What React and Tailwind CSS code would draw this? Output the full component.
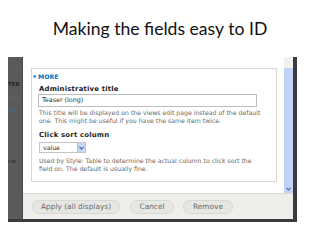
export default function App() {
  const dv = "font-['DejaVu_Sans',sans-serif]";
  return (
    <div className="w-[320px] h-[240px] bg-white overflow-hidden flex flex-col">
      <div className="h-[57px] flex justify-center pt-[18px] text-[17.6px] leading-[22px] text-[#111111] font-['Lato',sans-serif]">
        Making the fields easy to ID
      </div>
      <div className={`ml-[8px] w-[289px] h-[165px] flex flex-col ${dv}`}>
        <div className="flex flex-1 min-h-0">
          <div className="w-[15px] bg-[#5a5a5a] overflow-hidden flex flex-col text-[5.5px] leading-[8px] whitespace-nowrap border-r border-[#4a4a4a]">
            <div className="mt-[6px] text-[#4f6987]">e (=</div>
            <div className="mt-[9px] text-[#242424] font-bold">TER</div>
            <div className="mt-[6px] text-[#4f6987]">y titl</div>
            <div className="mt-[4px] text-[#4f6987]">dan</div>
            <div className="mt-[43px] text-[#2a2a2a]">ew</div>
          </div>
          <div className="flex-1 flex flex-col">
            <div className="flex-1 flex bg-white min-h-0">
              <div className="flex-1 pl-[8px] pr-[7px] pt-[11px]">
                <div className="h-[114px] border border-[#d6d6d6] px-[7px] pt-[4px] flex flex-col">
                  <div className="-ml-[6px] flex items-center gap-[2px] h-[8px] leading-[8px] text-[6.2px] font-bold text-[#0074bd]">
                    <span className="text-[4px]">▼</span>
                    <span>MORE</span>
                  </div>
                  <div className="mt-[4px] h-[9px] leading-[9px] text-[6.9px] font-bold text-[#222222] tracking-[0.2px]">
                    Administrative title
                  </div>
                  <div className="-ml-[1px] w-[219px] h-[13px] border border-[#bdbdbd] text-[6.4px] leading-[11px] pl-[3px] text-[#333333]">
                    Teaser (long)
                  </div>
                  <div className="mt-[2px] text-[6.2px] leading-[8px] text-[#6b6b6b] whitespace-nowrap">
                    <div>This title will be displayed on the views edit page instead of the default</div>
                    <div>one. This might be useful if you have the same item twice.</div>
                  </div>
                  <div className="mt-[6px] h-[9px] leading-[9px] text-[6.9px] font-bold text-[#222222] tracking-[0.2px]">
                    Click sort column
                  </div>
                  <div className="mt-[2px] w-[47px] h-[11px] border border-[#c4c4c4] flex items-center text-[6.2px] text-[#333333]">
                    <span className="flex-1 pl-[3px] leading-[9px]">value</span>
                    <span className="w-[8px] h-[9px] bg-[#c8d8f4] border-l border-[#aabde0] flex items-center justify-center">
                      <svg width="5" height="4" viewBox="0 0 5 4">
                        <path d="M0.5 0.8 L2.5 3 L4.5 0.8" stroke="#3a5aa0" strokeWidth="1.1" fill="none" />
                      </svg>
                    </span>
                  </div>
                  <div className="mt-[4px] text-[6.2px] leading-[8px] text-[#6b6b6b] whitespace-nowrap">
                    <div>Used by Style: Table to determine the actual column to click sort the</div>
                    <div>field on. The default is usually fine.</div>
                  </div>
                </div>
              </div>
              <div className="w-[9px] flex flex-col">
                <div className="h-[11px] bg-[#f2f2ec]" />
                <div className="flex-1 bg-[#c3d3f7]" />
                <div className="h-[8px] bg-[#c3d3f7] flex items-center justify-center">
                  <svg width="5" height="4" viewBox="0 0 5 4">
                    <path d="M0.5 0.8 L2.5 3 L4.5 0.8" stroke="#4a64a8" strokeWidth="1.1" fill="none" />
                  </svg>
                </div>
              </div>
            </div>
            <div className="h-[26px] bg-[#efeeea] border-t border-[#dcdcd6] flex items-start pt-[6px] pl-[9px] gap-[10px] text-[7.4px] text-[#6a6a6a]">
              <div className="w-[88px] h-[14px] rounded-full bg-[#e6e6e2] border border-[#d8d8d4] flex items-center justify-center">
                Apply (all displays)
              </div>
              <div className="w-[44px] h-[14px] rounded-full bg-[#e6e6e2] border border-[#d8d8d4] flex items-center justify-center">
                Cancel
              </div>
              <div className="-ml-[1px] w-[50px] h-[14px] rounded-full bg-[#e6e6e2] border border-[#d8d8d4] flex items-center justify-center">
                Remove
              </div>
            </div>
          </div>
          <div className="w-[4px] bg-[#3b3b3b]" />
        </div>
        <div className="h-[3px] bg-[#3b3b3b]" />
      </div>
    </div>
  );
}
